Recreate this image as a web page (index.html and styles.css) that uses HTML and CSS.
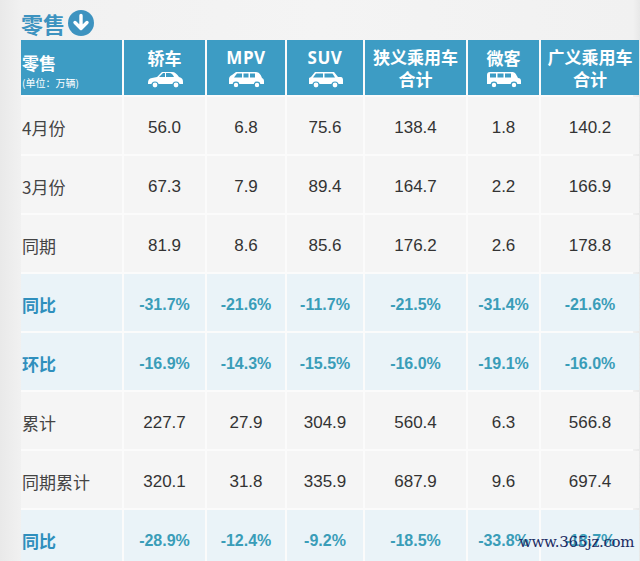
FILE: index.html
```html
<!DOCTYPE html>
<html lang="zh">
<head>
<meta charset="utf-8">
<link rel="stylesheet" href="styles.css">
</head>
<body>
<div class="page">
  <div class="title">
    <span class="title-text">零售</span>
    <svg class="title-icon" width="26" height="26" viewBox="0 0 26 26"><circle cx="13" cy="13" r="13" fill="#3d93c0"/><path d="M13 5.5v13M7 12.5l6 6 6-6" stroke="#fff" stroke-width="3.4" fill="none" stroke-linecap="round" stroke-linejoin="round"/></svg>
  </div>
  <div class="table">
    <div class="hcell first">
      <span class="hmain">零售</span>
      <span class="hsub">(单位：万辆)</span>
    </div>
    <div class="hcell">
      <span class="hname">轿车</span>
      <svg class="car" width="40" height="18" viewBox="0 0 40 18"><path d="M3 13c0-3 1-4.5 4-5l5-1 5-5h10c3 0 5 2 7 5 3 1 4 2 4 5v2H3z" fill="#fff"/><path d="M18 3l-4 4h6V3zM21 3v4h8c-1-2-2-4-5-4z" fill="#3d9cc4"/><circle cx="10" cy="15" r="3" fill="#fff" stroke="#3d9cc4" stroke-width="1.2"/><circle cx="31" cy="15" r="3" fill="#fff" stroke="#3d9cc4" stroke-width="1.2"/></svg>
    </div>
    <div class="hcell">
      <span class="hname lat">MPV</span>
      <svg class="car" width="40" height="18" viewBox="0 0 40 18"><path d="M3 14V9c0-2 1-3 3-4l4-3h20c3 0 5 3 6 6 2 1 2 2 2 4v2z" fill="#fff"/><path d="M11 3.5h5v4H8zM17.5 3.5h5v4h-5zM24 3.5h5v4h-5z" fill="#3d9cc4"/><circle cx="10" cy="15" r="2.8" fill="#fff" stroke="#3d9cc4" stroke-width="1.2"/><circle cx="31" cy="15" r="2.8" fill="#fff" stroke="#3d9cc4" stroke-width="1.2"/></svg>
    </div>
    <div class="hcell">
      <span class="hname lat">SUV</span>
      <svg class="car" width="40" height="18" viewBox="0 0 40 18"><path d="M4 14V8l2-1 4-5h19l4 5h3c1 0 2 1 2 3v4z" fill="#fff"/><path d="M11 3.5h7v4h-10zM19.5 3.5h8l2.5 4h-10.5z" fill="#3d9cc4"/><circle cx="11" cy="15" r="3" fill="#fff" stroke="#3d9cc4" stroke-width="1.2"/><circle cx="30" cy="15" r="3" fill="#fff" stroke="#3d9cc4" stroke-width="1.2"/></svg>
    </div>
    <div class="hcell">
      <span class="hname">狭义乘用车</span>
      <span class="hname">合计</span>
    </div>
    <div class="hcell">
      <span class="hname">微客</span>
      <svg class="car" width="40" height="18" viewBox="0 0 40 18"><path d="M3 14V5c0-2 1-3 3-3h22c3 0 4 2 6 6 2 0 3 1 3 3v3z" fill="#fff"/><path d="M6 3.5h6v4H6zM13.5 3.5h6v4h-6zM21 3.5h6v4h-6z" fill="#3d9cc4"/><circle cx="10" cy="15" r="2.8" fill="#fff" stroke="#3d9cc4" stroke-width="1.2"/><circle cx="30" cy="15" r="2.8" fill="#fff" stroke="#3d9cc4" stroke-width="1.2"/></svg>
    </div>
    <div class="hcell">
      <span class="hname">广义乘用车</span>
      <span class="hname">合计</span>
    </div>

    <div class="lab">4月份</div><div class="num">56.0</div><div class="num">6.8</div><div class="num">75.6</div><div class="num">138.4</div><div class="num">1.8</div><div class="num">140.2</div>
    <div class="lab">3月份</div><div class="num">67.3</div><div class="num">7.9</div><div class="num">89.4</div><div class="num">164.7</div><div class="num">2.2</div><div class="num">166.9</div>
    <div class="lab">同期</div><div class="num">81.9</div><div class="num">8.6</div><div class="num">85.6</div><div class="num">176.2</div><div class="num">2.6</div><div class="num">178.8</div>
    <div class="lab pct">同比</div><div class="num pct">-31.7%</div><div class="num pct">-21.6%</div><div class="num pct">-11.7%</div><div class="num pct">-21.5%</div><div class="num pct">-31.4%</div><div class="num pct">-21.6%</div>
    <div class="lab pct">环比</div><div class="num pct">-16.9%</div><div class="num pct">-14.3%</div><div class="num pct">-15.5%</div><div class="num pct">-16.0%</div><div class="num pct">-19.1%</div><div class="num pct">-16.0%</div>
    <div class="lab">累计</div><div class="num">227.7</div><div class="num">27.9</div><div class="num">304.9</div><div class="num">560.4</div><div class="num">6.3</div><div class="num">566.8</div>
    <div class="lab">同期累计</div><div class="num">320.1</div><div class="num">31.8</div><div class="num">335.9</div><div class="num">687.9</div><div class="num">9.6</div><div class="num">697.4</div>
    <div class="lab pct">同比</div><div class="num pct">-28.9%</div><div class="num pct">-12.4%</div><div class="num pct">-9.2%</div><div class="num pct">-18.5%</div><div class="num pct">-33.8%</div><div class="num pct">-18.7%</div>
  </div>
  <div class="site">www.365jz.com</div>
</div>
</body>
</html>
```

FILE: styles.css
```css
html, body {
  margin: 0;
  padding: 0;
}
body {
  background: #eeeeee;
  font-family: "Liberation Sans", "Noto Sans CJK SC", sans-serif;
  width: 640px;
  height: 561px;
  overflow: hidden;
}
.page {
  position: relative;
  width: 640px;
  height: 561px;
  background: linear-gradient(90deg, #e9e9e9 0, #f1f1f1 21px, #f4f4f4 50%, #f1f1f1 633px, #e8e8e8 640px);
}
.title {
  display: flex;
  align-items: center;
  gap: 3px;
  height: 40px;
  padding-left: 21px;
  padding-top: 5px;
  box-sizing: border-box;
}
.title-text {
  font-family: "Noto Sans CJK SC", sans-serif;
  font-weight: 700;
  font-size: 22px;
  color: #3d93c0;
  line-height: 1;
}
.title-icon {
  display: block;
}
.table {
  display: grid;
  grid-template-columns: 101px 81px 78px 76px 101px 71px 98px;
  grid-template-rows: 55px repeat(8, 57px);
  gap: 2px;
  margin-left: 21px;
  width: 612px;
  background: #fbfbfb;
}
.hcell {
  background: #3d9cc4;
  color: #fff;
  display: flex;
  flex-direction: column;
  align-items: center;
  justify-content: center;
  font-family: "Noto Sans CJK SC", sans-serif;
  font-weight: 700;
}
.hcell.first {
  align-items: flex-start;
  justify-content: flex-start;
  padding-left: 1px;
  padding-top: 14px;
}
.hmain {
  font-size: 17px;
  line-height: 18px;
}
.hsub {
  font-size: 10px;
  font-weight: 400;
  line-height: 12px;
  margin-top: 5px;
}
.hname {
  font-size: 17px;
  line-height: 22px;
}
.hname.lat {
  font-family: "Open Sans", "Liberation Sans", sans-serif;
  font-weight: 700;
  font-size: 17px;
  letter-spacing: 0.5px;
}
.car {
  display: block;
  margin-top: 1px;
}
.lab, .num {
  background: #f5f5f5;
  display: flex;
  align-items: center;
  font-size: 17px;
  color: #333;
}
.lab {
  font-family: "Noto Sans CJK SC", sans-serif;
  color: #444;
  padding-left: 1px;
  padding-top: 4px;
}
.num {
  justify-content: center;
  padding-top: 5px;
}
.lab.pct, .num.pct {
  background: #eaf3f8;
}
.lab.pct {
  color: #2f8fbd;
  font-weight: 700;
}
.num.pct {
  color: #3a9db8;
  font-weight: 700;
  font-size: 16px;
}
.site {
  position: absolute;
  left: 519px;
  top: 533px;
  font-family: "DejaVu Serif", serif;
  font-size: 15px;
  color: #1c2c63;
  letter-spacing: -0.3px;
}
```
